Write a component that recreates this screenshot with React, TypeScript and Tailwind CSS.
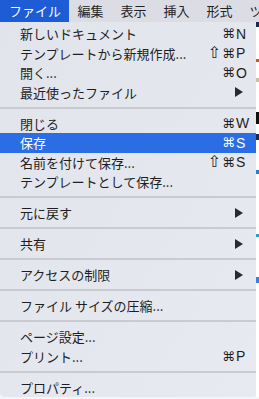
import React from "react";

type Item = {
  label: string;
  mods?: string;
  keyChar?: string;
  submenu?: boolean;
  active?: boolean;
};

type Entry = Item | "sep";

const entries: Entry[] = [
  { label: "新しいドキュメント", mods: "⌘", keyChar: "N" },
  { label: "テンプレートから新規作成...", mods: "⇧⌘", keyChar: "P" },
  { label: "開く...", mods: "⌘", keyChar: "O" },
  { label: "最近使ったファイル", submenu: true },
  "sep",
  { label: "閉じる", mods: "⌘", keyChar: "W" },
  { label: "保存", mods: "⌘", keyChar: "S", active: true },
  { label: "名前を付けて保存...", mods: "⇧⌘", keyChar: "S" },
  { label: "テンプレートとして保存..." },
  "sep",
  { label: "元に戻す", submenu: true },
  "sep",
  { label: "共有", submenu: true },
  "sep",
  { label: "アクセスの制限", submenu: true },
  "sep",
  { label: "ファイル サイズの圧縮..." },
  "sep",
  { label: "ページ設定..." },
  { label: "プリント...", mods: "⌘", keyChar: "P" },
  "sep",
  { label: "プロパティ..." },
];

const topMenus = ["ファイル", "編集", "表示", "挿入", "形式", "ツール"];

function Arrow({ light }: { light?: boolean }) {
  return (
    <svg width="8" height="10" viewBox="0 0 8 10">
      <path d="M0 0 L8 5 L0 10 Z" fill={light ? "#fff" : "#2a2a2e"} />
    </svg>
  );
}

function MenuRow({ item }: { item: Item }) {
  return (
    <div
      className={
        "flex items-center h-[19.5px] pl-[20px] pr-[10px] " +
        (item.active ? "bg-[#2b6de3] text-white" : "text-[#1e1e22]")
      }
    >
      <span className="flex-1 whitespace-nowrap leading-none">{item.label}</span>
      {item.keyChar && (
        <span className="flex items-center leading-none font-['Liberation_Sans','DejaVu_Sans',sans-serif] text-[14px]">
          {item.mods?.includes("⇧") && (
            <span className="font-['DejaVu_Sans',sans-serif] text-[16px] mr-[1px]">⇧</span>
          )}
          <span className="font-['DejaVu_Sans',sans-serif] text-[13px]">⌘</span>
          <span className="w-[11px] pl-[1px]">{item.keyChar}</span>
        </span>
      )}
      {item.submenu && (
        <span className="w-[11px] flex items-center">
          <Arrow light={item.active} />
        </span>
      )}
    </div>
  );
}

export default function App() {
  return (
    <div className="w-[259px] h-[399px] overflow-hidden bg-[#f4f5f8] font-['Noto_Sans_CJK_JP',sans-serif] text-[13px]">
      <div className="flex h-[22px] items-center bg-[#dcdde4] whitespace-nowrap">
        {topMenus.map((m, i) => (
          <div
            key={m}
            className={
              "h-full flex items-center px-[8.5px] text-[13px] " +
              (i === 0 ? "bg-[#1d5cd4] text-white pr-[8px] pl-[9px]" : "text-[#222226]")
            }
          >
            {m}
          </div>
        ))}
      </div>
      <div className="flex">
        <div className="w-[256px] h-[375px] shrink-0 bg-gradient-to-br from-[#e2e4ec] to-[#e8eaf1] rounded-b-[5px] pt-[2px] shadow-[1px_0_0_rgba(0,0,0,0.08)]">
          {entries.map((e, i) =>
            e === "sep" ? (
              <div key={i} className="py-[4.75px]">
                <div className="h-[2px] bg-[#cacbd2]" />
              </div>
            ) : (
              <MenuRow key={i} item={e} />
            )
          )}
        </div>
        <div className="flex-1 flex flex-col bg-white">
          <div className="h-[5px] bg-[#1b2a4e]" />
          <div className="h-[32px]" />
          <div className="h-[3px] bg-[#c45a2a]" />
          <div className="h-[16px]" />
          <div className="h-[4px] bg-[#c9c1a8]" />
          <div className="h-[30px]" />
          <div className="h-[12px] bg-[#111]" />
          <div className="h-[10px]" />
          <div className="h-[6px] bg-[#1b2a4e]" />
          <div className="h-[30px]" />
          <div className="h-[4px] bg-[#2a7fd0]" />
          <div className="h-[60px]" />
          <div className="h-[3px] bg-[#2a9fc0]" />
          <div className="h-[40px]" />
          <div className="h-[6px] bg-[#3a7ee0]" />
        </div>
      </div>
    </div>
  );
}
